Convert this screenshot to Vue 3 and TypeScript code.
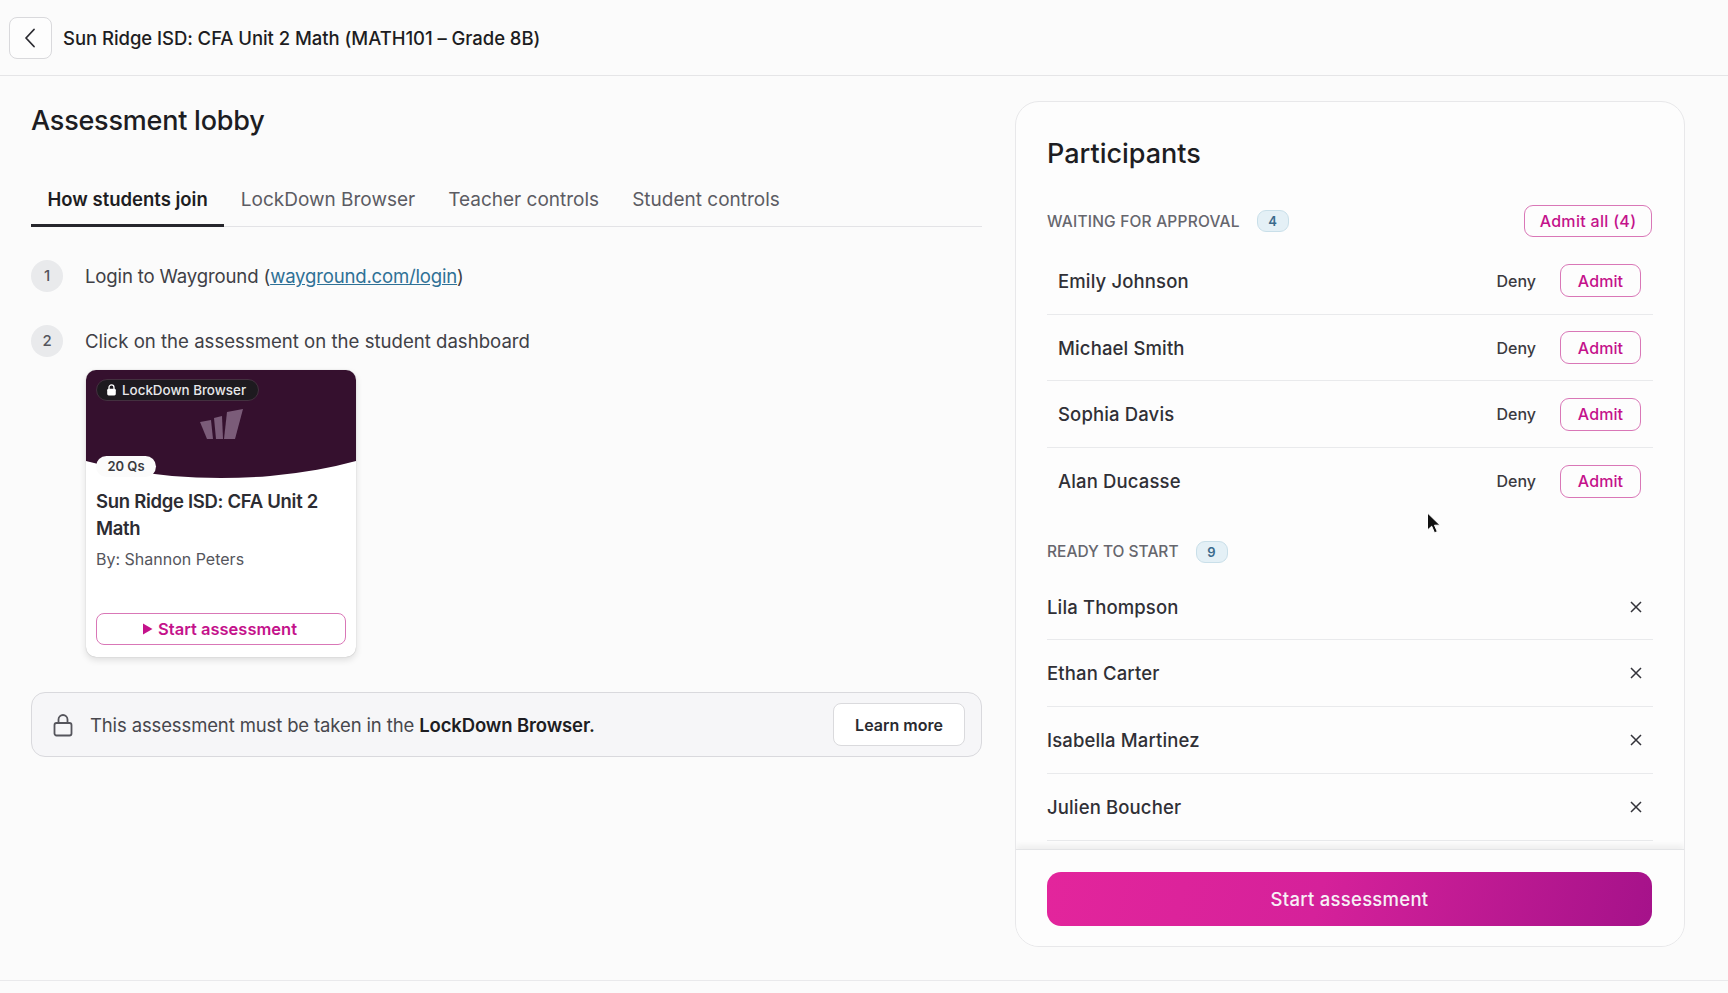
<script setup lang="ts">
const tabs: string[] = ['How students join', 'LockDown Browser', 'Teacher controls', 'Student controls']
const waiting: string[] = ['Emily Johnson', 'Michael Smith', 'Sophia Davis', 'Alan Ducasse']
const ready: string[] = ['Lila Thompson', 'Ethan Carter', 'Isabella Martinez', 'Julien Boucher']
</script>

<template>
  <div class="page">
    <header class="topbar">
      <button class="back" aria-label="Back">
        <svg width="16" height="20" viewBox="0 0 16 20" fill="none"><path d="M11 1.5 3 10l8 8.5" stroke="#2a2a30" stroke-width="1.8" stroke-linecap="round" stroke-linejoin="round" /></svg>
      </button>
      <span class="crumb">Sun Ridge ISD: CFA Unit 2 Math (MATH101 – Grade 8B)</span>
    </header>

    <main class="main">
      <section class="left">
        <h1 class="lobby">Assessment lobby</h1>
        <nav class="tabs">
          <span v-for="(t, i) in tabs" :key="t" class="tab" :class="{ active: i === 0 }">{{ t }}</span>
        </nav>

        <div class="step first">
          <span class="num">1</span>
          <span class="login">Login to Wayground (<a class="link">wayground.com/login</a>)</span>
        </div>
        <div class="step second">
          <span class="num">2</span>
          <span>Click on the assessment on the student dashboard</span>
        </div>

        <article class="card">
          <div class="cover">
            <span class="lock-pill">
              <svg width="11" height="12" viewBox="0 0 11 12"><path d="M3 5V3.4a2.5 2.5 0 0 1 5 0V5" fill="none" stroke="#fff" stroke-width="1.3" /><rect x="1.2" y="4.8" width="8.6" height="6.6" rx="1.4" fill="#fff" /></svg>
              LockDown Browser
            </span>
            <svg class="logo" width="44" height="32" viewBox="0 0 44 32">
              <polygon points="0,14 11,12 13,31 7,31" fill="#7b5c79" />
              <polygon points="14,10 22,8 23,31 16,31" fill="#7b5c79" />
              <polygon points="27,4 43,1 35,31 24,31" fill="#7b5c79" />
            </svg>
            <span class="qs">20 Qs</span>
          </div>
          <div class="card-body">
            <h3 class="card-title">Sun Ridge ISD: CFA Unit 2 Math</h3>
            <p class="by">By: Shannon Peters</p>
            <button class="card-btn">
              <svg width="11" height="12" viewBox="0 0 11 12"><path d="M1 .5 10.5 6 1 11.5z" fill="#c4128b" /></svg>
              Start assessment
            </button>
          </div>
        </article>

        <div class="notice">
          <svg class="notice-lock" width="22" height="24" viewBox="0 0 22 24" fill="none" stroke="#55555c" stroke-width="1.8"><path d="M6.5 10V6.5a4.5 4.5 0 0 1 9 0V10" /><rect x="2.5" y="10" width="17" height="12.5" rx="2" /></svg>
          <span class="notice-text">This assessment must be taken in the <strong>LockDown Browser.</strong></span>
          <button class="learn">Learn more</button>
        </div>
      </section>

      <aside class="panel">
        <div class="panel-body">
          <h2 class="panel-title">Participants</h2>
          <div class="sec-head waiting-head">
            <span class="sec-label">WAITING FOR APPROVAL</span>
            <span class="badge">4</span>
            <button class="admit-all">Admit all (4)</button>
          </div>
          <ul class="list waiting">
            <li v-for="n in waiting" :key="n" class="row indented">
              <span class="name">{{ n }}</span>
              <span class="deny">Deny</span>
              <button class="admit">Admit</button>
            </li>
          </ul>
          <div class="sec-head ready-head">
            <span class="sec-label">READY TO START</span>
            <span class="badge">9</span>
          </div>
          <ul class="list">
            <li v-for="n in ready" :key="n" class="row ready-row">
              <span class="name">{{ n }}</span>
              <svg class="x" width="12" height="12" viewBox="0 0 12 12"><path d="M1 1l10 10M11 1 1 11" stroke="#33333a" stroke-width="1.5" /></svg>
            </li>
          </ul>
        </div>
        <div class="panel-foot">
          <button class="start">Start assessment</button>
        </div>
      </aside>
    </main>

    <div class="bottom-line"></div>

    <svg class="cursor" width="16" height="24" viewBox="0 0 16 24"><path d="M1.5 1v17l4.2-3.8 2.8 6.6 2.8-1.2-2.8-6.4H14z" fill="#111" stroke="#fff" stroke-width="1" /></svg>
  </div>
</template>

<style>
html, body { margin: 0; background: #fbfbfb; }
</style>

<style scoped>
* { box-sizing: border-box; }
.page {
  position: relative;
  width: 1728px;
  height: 993px;
  overflow: hidden;
  background: #fbfbfb;
  font-family: Inter, "Liberation Sans", sans-serif;
  color: #1d1d22;
}
button { font-family: inherit; background: transparent; cursor: pointer; }
.topbar {
  height: 76px;
  display: flex;
  align-items: center;
  gap: 11px;
  padding: 1px 0 0 9px;
  border-bottom: 1px solid #e5e5e7;
}
.back {
  width: 43px;
  height: 42px;
  display: flex;
  align-items: center;
  justify-content: center;
  padding: 0;
  background: #fdfdfd;
  border: 1px solid #d9d9dc;
  border-radius: 8px;
}
.crumb { font-size: 18.5px; font-weight: 500; letter-spacing: -0.05px; }
.main {
  display: flex;
  height: 904px;
  padding: 25px 43px 0 31px;
  gap: 33px;
}
.left { width: 951px; flex: none; }
.lobby { margin: 0; font-size: 27px; line-height: 40px; font-weight: 500; letter-spacing: -0.22px; }
.tabs {
  display: flex;
  gap: 0;
  margin-top: 37px;
  height: 49px;
  border-bottom: 1px solid #e3e3e6;
}
.tab {
  padding: 0 16.5px;
  height: 49px;
  line-height: 43px;
  font-size: 19px;
  color: #5c5c63;
}
.tab.active { color: #1d1d22; font-size: 18.5px; font-weight: 600; border-bottom: 3px solid #26262c; }
.step {
  display: flex;
  align-items: center;
  gap: 22px;
  font-size: 18.6px;
  color: #404046;
  line-height: 32px;
}
.step.first { margin-top: 33px; }
.step.second { margin-top: 33px; }
.login { letter-spacing: -0.16px; }
.num {
  width: 32px;
  height: 32px;
  border-radius: 50%;
  background: #e9eaec;
  color: #55555c;
  font-size: 15px;
  font-weight: 500;
  text-align: center;
  flex: none;
}
.link { color: #2f7196; text-decoration: underline; letter-spacing: -0.2px; }
.card {
  width: 270px;
  height: 287px;
  margin: 13px 0 0 55px;
  border-radius: 10px;
  background: #fff;
  box-shadow: 0 0 1px rgba(0, 0, 0, .3), 0 3px 7px rgba(0, 0, 0, .12);
  overflow: hidden;
}
.cover {
  position: relative;
  height: 108px;
}
.cover::before {
  content: "";
  position: absolute;
  inset: 0;
  background: #35102e;
  clip-path: ellipse(93% 100% at 50% 0);
}
.lock-pill {
  position: absolute;
  left: 10px;
  top: 9px;
  height: 22px;
  padding: 0 12px 0 9px;
  display: flex;
  align-items: center;
  gap: 5px;
  border-radius: 11px;
  background: #1d1a1f;
  border: 1px solid #43303f;
  color: #e8e8ea;
  font-size: 13.4px;
  font-weight: 500;
}
.logo { position: absolute; left: 114px; top: 38px; }
.qs {
  position: absolute;
  left: 10px;
  top: 86px;
  height: 21px;
  width: 60px;
  line-height: 21px;
  text-align: center;
  border-radius: 11px;
  background: #fbfbfb;
  font-size: 13px;
  font-weight: 600;
  color: #3a3a40;
}
.card-body { padding: 10px 10px 0; }
.card-title { margin: 0; font-size: 18.5px; line-height: 27px; font-weight: 600; color: #2c2c32; letter-spacing: -0.3px; }
.by { margin: 6px 0 0; font-size: 16px; line-height: 22px; color: #55555c; }
.card-btn {
  width: 250px;
  height: 32px;
  margin-top: 43px;
  padding: 0 3px 0 0;
  display: flex;
  align-items: center;
  justify-content: center;
  gap: 5px;
  border: 1px solid #d977b7;
  border-radius: 8px;
  background: #fff;
  color: #c4128b;
  font-size: 16.5px;
  font-weight: 600;
}
.notice {
  width: 951px;
  height: 65px;
  margin-top: 35px;
  display: flex;
  align-items: center;
  padding: 0 16px 0 20px;
  background: #f6f6f8;
  border: 1px solid #d9d9dd;
  border-radius: 14px;
}
.notice-lock { flex: none; }
.notice-text { margin-left: 16px; font-size: 18.5px; color: #47474d; letter-spacing: -0.13px; }
.notice-text strong { font-weight: 600; color: #1d1d22; }
.learn {
  margin-left: auto;
  width: 132px;
  height: 43px;
  border: 1px solid #dadadd;
  border-radius: 8px;
  background: #fff;
  font-size: 16px;
  font-weight: 600;
  color: #2a2a30;
}
.panel {
  width: 670px;
  height: 846px;
  flex: none;
  display: flex;
  flex-direction: column;
  border: 1px solid #e8e8ea;
  border-radius: 24px;
  background: #fdfdfd;
  overflow: hidden;
}
.panel-body { flex: 1; min-height: 0; overflow: hidden; padding: 34px 31px 0 31px; }
.panel-title { margin: 0; font-size: 27px; line-height: 36px; font-weight: 500; }
.sec-head { display: flex; align-items: center; }
.waiting-head { height: 32px; margin-top: 33px; }
.ready-head { height: 24px; margin-top: 25px; }
.sec-label { font-size: 15.5px; font-weight: 500; color: #66666d; letter-spacing: 0.2px; }
.ready-head .sec-label { letter-spacing: 0; }
.badge {
  width: 32px;
  height: 22px;
  margin-left: 17px;
  border-radius: 9px;
  background: #e4f0f6;
  border: 1px solid #c9dfe9;
  color: #3b6a8c;
  font-size: 13px;
  font-weight: 600;
  line-height: 20px;
  text-align: center;
}
.admit-all {
  margin-left: auto;
  margin-right: 1px;
  width: 128px;
  height: 32px;
  padding: 0;
  border: 1px solid #d977b7;
  border-radius: 9px;
  color: #c4128b;
  font-size: 16px;
  font-weight: 500;
  letter-spacing: 0.3px;
}
.list { list-style: none; margin: 0; padding: 0; }
.waiting { margin-top: 11px; }
.ready-head + .list { margin-top: 10px; }
.row {
  height: 66.7px;
  display: flex;
  align-items: center;
  border-bottom: 1px solid #e9eaec;
}
.waiting .row:last-child { border-bottom: none; }
.indented { padding: 0 12px 0 11px; }
.ready-row { padding-right: 11px; }
.name { flex: 1; font-size: 18.5px; font-weight: 500; color: #303036; letter-spacing: 0.14px; }
.deny { font-size: 16px; font-weight: 500; color: #3a3a40; margin-right: 24px; }
.admit {
  width: 81px;
  height: 33px;
  padding: 0;
  border: 1px solid #d977b7;
  border-radius: 9px;
  color: #c4128b;
  font-size: 16px;
  font-weight: 500;
  letter-spacing: 0.1px;
}
.panel-foot {
  flex: none;
  height: 97px;
  padding: 22px 32px 0 31px;
  border-top: 1px solid #e3e4e6;
  box-shadow: 0 -4px 6px rgba(0, 0, 0, .06);
  background: #fdfdfd;
  position: relative;
}
.start {
  width: 605px;
  height: 54px;
  border: none;
  border-radius: 14px;
  background: linear-gradient(105deg, #e3259c 0%, #d5219a 45%, #a5128a 100%);
  color: #f7f0f6;
  font-size: 18.5px;
  font-weight: 500;
  letter-spacing: 0.27px;
}
.bottom-line { height: 1px; background: #e9e9eb; }
.cursor { position: absolute; left: 1426px; top: 512px; }
</style>
